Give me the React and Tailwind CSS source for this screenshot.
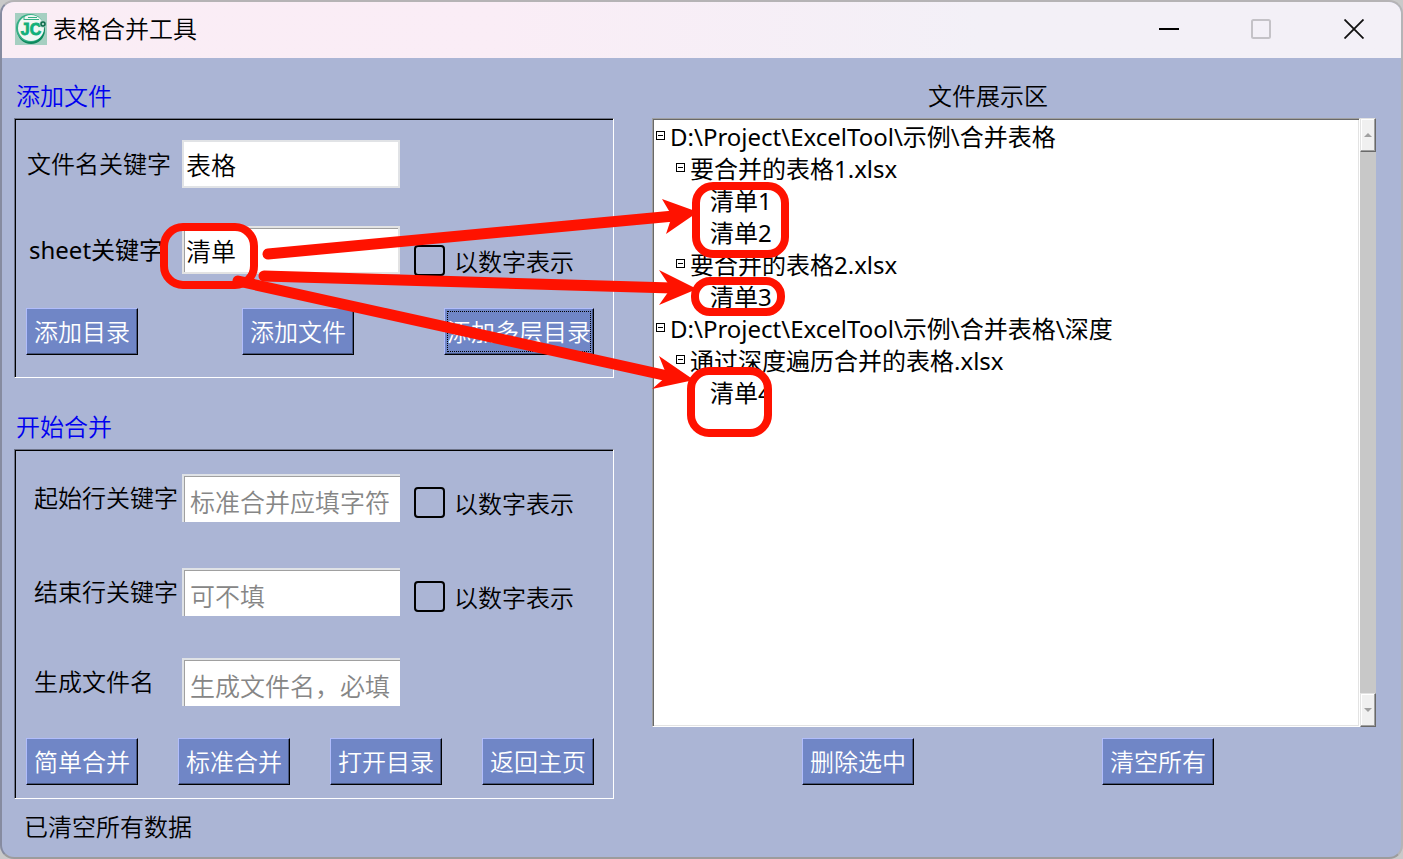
import React, { useState } from "react";

const treeData = [
  {
    name: "D:\\Project\\ExcelTool\\示例\\合并表格",
    children: [
      {
        name: "要合并的表格1.xlsx",
        children: [{ name: "清单1" }, { name: "清单2" }],
      },
      { name: "要合并的表格2.xlsx", children: [{ name: "清单3" }] },
    ],
  },
  {
    name: "D:\\Project\\ExcelTool\\示例\\合并表格\\深度",
    children: [
      { name: "通过深度遍历合并的表格.xlsx", children: [{ name: "清单4" }] },
    ],
  },
];

const Button = ({ children, className = "w-28" }) => (
  <button
    type="button"
    className={`${className} h-[47px] shrink-0 whitespace-nowrap border border-t-[#b1bdfb] border-l-[#b1bdfb] border-r-black border-b-black bg-[#7086c6] text-center leading-8 text-white shadow-[inset_-1px_-1px_0_#46557f]`}
  >
    {children}
  </button>
);

const inputStyles = {
  flat: "border-2 border-[#e1e3e6] pl-0.5",
  sunken: "border-2 border-[#e3e3e3] pl-0.5 shadow-[inset_1px_1px_0_#a0a0a0]",
  hint: "border-t-2 border-l-2 border-[#dfe2e6] pt-1.5 pl-1.5 shadow-[inset_1px_1px_0_#a0a0a0]",
};

const Field = ({ id, label, labelClass = "pl-3", variant, children, ...rest }) => (
  <div className="flex h-12 items-center">
    <label htmlFor={id} className={`${labelClass} w-[167px] shrink-0 whitespace-nowrap`}>
      {label}
    </label>
    <input
      id={id}
      type="text"
      className={`${inputStyles[variant]} h-12 w-[218px] shrink-0 bg-white text-[25px] leading-8 outline-none placeholder:text-[#868686]`}
      {...rest}
    />
    {children}
  </div>
);

const NumberCheck = ({ id, className }) => (
  <div className={`${className} ml-3.5 flex items-center gap-[9px]`}>
    <input
      id={id}
      type="checkbox"
      className="size-[31px] appearance-none rounded-[4px] border-2 border-black checked:bg-[#7086c6]"
    />
    <label htmlFor={id} className="mt-1 whitespace-nowrap">
      以数字表示
    </label>
  </div>
);

const Panel = ({ title, className, children }) => (
  <section>
    <h2 className="h-10 pl-0.5 leading-9 text-[#0000f0]">{title}</h2>
    <div
      className={`${className} flex flex-col border border-t-[#6d7388] border-l-[#6d7388] border-r-white border-b-white shadow-[inset_1px_1px_0_#000]`}
    >
      {children}
    </div>
  </section>
);

const TreeNode = ({ node }) => {
  const [open, setOpen] = useState(true);

  return (
    <li role="treeitem" aria-expanded={node.children ? open : undefined}>
      <div className="flex h-8 items-center gap-[5px] whitespace-nowrap">
        {node.children ? (
          <button
            type="button"
            aria-label="展开或折叠"
            onClick={() => setOpen(!open)}
            className="mb-1 flex size-[9px] items-center justify-center border border-black bg-white"
          >
            <span className="h-px w-[5px] bg-black" />
          </button>
        ) : (
          <span className="w-[9px]" />
        )}
        <span>{node.name}</span>
      </div>
      {node.children && open && (
        <ul role="group" className="pl-5">
          {node.children.map((child) => (
            <TreeNode key={child.name} node={child} />
          ))}
        </ul>
      )}
    </li>
  );
};

const ScrollButton = ({ label, d }) => (
  <button
    type="button"
    aria-label={label}
    className="flex h-[34px] w-4 items-center justify-center border border-t-[#e3e3e3] border-l-[#e3e3e3] border-r-[#696969] border-b-[#696969] bg-[#f0f0f0] shadow-[inset_-1px_-1px_0_#a0a0a0,inset_1px_1px_0_#fff]"
  >
    <svg viewBox="0 0 8 4" className="h-1 w-2">
      <path d={d} fill="#a0a0a0" />
    </svg>
  </button>
);

const Logo = () => (
  <svg viewBox="0 0 32 32" className="size-8 shrink-0">
    <rect width="32" height="32" fill="#a5cfc1" />
    <circle cx="16" cy="17" r="14" fill="#0c8a5e" />
    <circle cx="15" cy="15" r="14" fill="#35ae85" />
    <circle cx="16" cy="15" r="13" fill="#f1f7f4" />
    <path d="M9 3v4M9 6.5h15M13 4.5h9" stroke="#35ae85" strokeWidth="1" />
    <text
      x="16"
      y="22"
      textAnchor="middle"
      fontFamily="Liberation Sans"
      fontWeight="700"
      fontSize="16"
      fill="#12b07a"
      stroke="#12b07a"
      strokeWidth="0.8"
    >
      JC
    </text>
    <circle cx="28" cy="11" r="3.5" fill="#a5cfc1" />
    <circle cx="28" cy="11" r="2" fill="none" stroke="#0b6b4a" strokeWidth="1.5" />
  </svg>
);

const TitleBar = () => (
  <header className="flex h-14 items-center bg-linear-to-r from-[#faedf5] via-[#faedf6] via-35% to-[#f3f0f7] to-70% pb-0.5 pl-[13px]">
    <Logo />
    <h1 className="ml-1.5 flex-1">表格合并工具</h1>
    <button type="button" aria-label="最小化" className="flex h-full w-[92px] items-center justify-center">
      <svg viewBox="0 0 20 20" className="size-5">
        <path d="M0 10h20" stroke="#000" strokeWidth="2" />
      </svg>
    </button>
    <button type="button" aria-label="最大化" disabled className="flex h-full w-[92px] items-center justify-center">
      <svg viewBox="0 0 20 20" className="size-5">
        <rect x="1" y="1" width="18" height="18" rx="1.5" fill="none" stroke="#c4c2c7" strokeWidth="2" />
      </svg>
    </button>
    <button type="button" aria-label="关闭" className="flex h-full w-[94px] items-center justify-center">
      <svg viewBox="0 0 20 20" className="size-5">
        <path d="M0.5 0.5l19 19M19.5 0.5l-19 19" stroke="#111" strokeWidth="1.8" />
      </svg>
    </button>
  </header>
);

// red marks linking the sheet keyword to the sheets it found
const Annotations = () => (
  <svg
    viewBox="0 0 800 450"
    className="pointer-events-none absolute top-0 left-0 h-[450px] w-[800px]"
    aria-hidden="true"
  >
    <g fill="none" stroke="#ff1200" strokeWidth="8">
      <rect x="164" y="227" width="90" height="58" rx="19" />
      <rect x="696" y="186" width="89" height="68" rx="17" />
      <rect x="695" y="281" width="86" height="31" rx="15" />
      <rect x="691" y="371" width="77" height="62" rx="18" />
    </g>
    <g stroke="#ff1200" strokeWidth="11" strokeLinecap="round">
      <path d="M268 254L674 216" />
      <path d="M264 276L672 288" />
      <path d="M238 281L668 376" />
    </g>
    <g fill="#ff1200">
      <path d="M698 212L662 199L672 216L666 234Z" />
      <path d="M697 289L659 270L671 288L659 305Z" />
      <path d="M694 380L659 356L667 376L652 389Z" />
    </g>
  </svg>
);

const App = () => {
  const [fileKey, setFileKey] = useState("表格");
  const [sheetKey, setSheetKey] = useState("清单");

  return (
    <div className="relative flex min-h-screen bg-[#c9c9c9] font-['Noto_Sans','Noto_Sans_CJK_SC',sans-serif] text-2xl leading-8 font-[350] text-black">
      <div className="flex flex-1 flex-col overflow-hidden rounded-[14px] border-2 border-t-[#b5b3b5] border-r-[#b4b4b6] border-b-[#9c9c9c] border-l-[#868ba0] bg-[#abb5d5]">
        <TitleBar />

        <main className="flex flex-1 gap-[38px] pt-5 pr-[25px] pl-3">
          <div className="flex w-[600px] shrink-0 flex-col">
            <Panel title="添加文件" className="h-[260px] pt-[21px]">
              <Field
                id="fileKey"
                label="文件名关键字"
                variant="flat"
                value={fileKey}
                onChange={(e) => setFileKey(e.target.value)}
              />
              <div className="mt-[38px]">
                <Field
                  id="sheetKey"
                  label="sheet关键字"
                  labelClass="pl-3.5 font-normal"
                  variant="sunken"
                  value={sheetKey}
                  onChange={(e) => setSheetKey(e.target.value)}
                >
                  <NumberCheck id="sheetNum" className="mt-5" />
                </Field>
              </div>
              <div className="mt-[34px] flex pr-[19px] pl-[11px]">
                <Button>添加目录</Button>
                <Button className="ml-[104px] w-28">添加文件</Button>
                <Button className="ml-auto w-[150px] outline-1 -outline-offset-4 outline-black outline-dotted">
                  添加多层目录
                </Button>
              </div>
            </Panel>

            <div className="mt-[31px]">
              <Panel title="开始合并" className="h-[350px] pt-6">
                <Field
                  id="startKey"
                  label="起始行关键字"
                  labelClass="pl-[19px]"
                  variant="hint"
                  placeholder="标准合并应填字符"
                >
                  <NumberCheck id="startNum" className="mt-2" />
                </Field>
                <div className="mt-[46px]">
                  <Field
                    id="endKey"
                    label="结束行关键字"
                    labelClass="pl-[19px]"
                    variant="hint"
                    placeholder="可不填"
                  >
                    <NumberCheck id="endNum" className="mt-2" />
                  </Field>
                </div>
                <div className="mt-[42px]">
                  <Field
                    id="outName"
                    label="生成文件名"
                    labelClass="pl-[19px]"
                    variant="hint"
                    placeholder="生成文件名，必填"
                  />
                </div>
                <div className="mt-8 flex justify-between pr-[19px] pl-[11px]">
                  <Button>简单合并</Button>
                  <Button>标准合并</Button>
                  <Button>打开目录</Button>
                  <Button>返回主页</Button>
                </div>
              </Panel>
            </div>

            <p className="mt-3 pb-3 pl-2.5">已清空所有数据</p>
          </div>

          <section className="flex min-w-0 flex-1 flex-col">
            <h2 className="h-10 pr-[52px] text-center leading-9">文件展示区</h2>
            <div className="flex h-[609px]">
              <ul
                role="tree"
                className="min-w-0 flex-1 overflow-hidden border border-t-[#a0a0a0] border-l-[#a0a0a0] border-r-white border-b-white bg-white pt-0.5 pl-[3px] font-normal shadow-[inset_1px_1px_0_#696969,inset_-1px_-1px_0_#e3e3e3]"
              >
                {treeData.map((node) => (
                  <TreeNode key={node.name} node={node} />
                ))}
              </ul>
              <div className="flex flex-col justify-between bg-[#c8c8c8]">
                <ScrollButton label="向上滚动" d="M4 0l4 4H0z" />
                <ScrollButton label="向下滚动" d="M0 0h8L4 4z" />
              </div>
            </div>
            <div className="mt-[11px] flex gap-[188px] pl-[150px]">
              <Button>删除选中</Button>
              <Button>清空所有</Button>
            </div>
          </section>
        </main>
      </div>

      <Annotations />
    </div>
  );
};

export default App;
